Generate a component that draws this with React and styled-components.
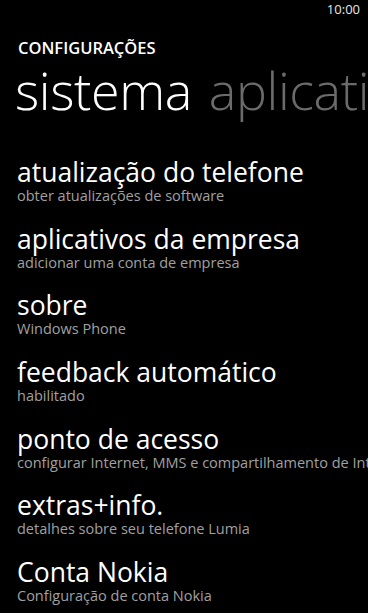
import React from "react";
import styled, { createGlobalStyle } from "styled-components";

const GlobalStyle = createGlobalStyle`
  html, body {
    margin: 0;
    padding: 0;
    background: #000;
  }
  body {
    font-family: "Open Sans", "Noto Sans", sans-serif;
    color: #fff;
  }
`;

const Screen = styled.div`
  width: 368px;
  height: 613px;
  overflow: hidden;
  background: #000;
  display: flex;
  flex-direction: column;
`;

const StatusBar = styled.div`
  height: 24px;
  display: flex;
  justify-content: flex-end;
  align-items: center;
  padding-right: 8px;
  font-size: 13px;
  color: #e6e6e6;
`;

const AppTitle = styled.div`
  margin-top: 20px;
  padding-left: 18px;
  font-size: 16.5px;
  font-weight: 600;
  line-height: 20px;
`;

const PivotRow = styled.div`
  display: flex;
  gap: 17px;
  padding-left: 15px;
  white-space: nowrap;
`;

const PivotHeader = styled.span`
  font-size: 52px;
  font-weight: 300;
  line-height: 64px;
  letter-spacing: -0.4px;
  color: ${(p) => (p.$active ? "#fff" : "#6b6b6b")};
`;

const List = styled.div`
  display: flex;
  flex-direction: column;
  padding-top: 36px;
  padding-left: 17px;
`;

const Item = styled.div`
  height: 66.67px;
  white-space: nowrap;
`;

const ItemTitle = styled.div`
  font-size: 26.5px;
  font-weight: 400;
  line-height: 29px;
  color: #fff;
`;

const ItemSub = styled.div`
  font-size: 14.5px;
  line-height: 18px;
  color: #a0a0a0;
`;

const items = [
  ["atualização do telefone", "obter atualizações de software"],
  ["aplicativos da empresa", "adicionar uma conta de empresa"],
  ["sobre", "Windows Phone"],
  ["feedback automático", "habilitado"],
  ["ponto de acesso", "configurar Internet, MMS e compartilhamento de Internet"],
  ["extras+info.", "detalhes sobre seu telefone Lumia"],
  ["Conta Nokia", "Configuração de conta Nokia"],
];

export default function App() {
  return (
    <>
      <GlobalStyle />
      <Screen>
        <StatusBar>10:00</StatusBar>
        <AppTitle>CONFIGURAÇÕES</AppTitle>
        <PivotRow>
          <PivotHeader $active>sistema</PivotHeader>
          <PivotHeader>aplicativos</PivotHeader>
        </PivotRow>
        <List>
          {items.map(([title, sub]) => (
            <Item key={title}>
              <ItemTitle>{title}</ItemTitle>
              <ItemSub>{sub}</ItemSub>
            </Item>
          ))}
        </List>
      </Screen>
    </>
  );
}
